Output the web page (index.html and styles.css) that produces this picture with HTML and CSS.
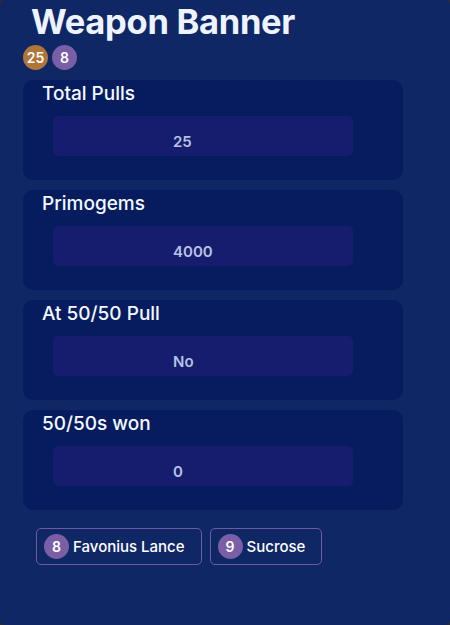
FILE: index.html
```html
<!DOCTYPE html>
<html>
<head>
<meta charset="utf-8">
<link rel="stylesheet" href="styles.css">
</head>
<body>
<div class="page">
  <h1 class="title">Weapon Banner</h1>
  <div class="badges">
    <span class="badge gold">25</span>
    <span class="badge purple">8</span>
  </div>
  <div class="cards">
    <div class="card">
      <div class="label">Total Pulls</div>
      <div class="field">25</div>
    </div>
    <div class="card">
      <div class="label">Primogems</div>
      <div class="field">4000</div>
    </div>
    <div class="card">
      <div class="label">At 50/50 Pull</div>
      <div class="field">No</div>
    </div>
    <div class="card">
      <div class="label">50/50s won</div>
      <div class="field">0</div>
    </div>
  </div>
  <div class="chips">
    <div class="chip"><span class="badge purple">8</span><span class="chip-text">Favonius Lance</span></div>
    <div class="chip"><span class="badge purple">9</span><span class="chip-text">Sucrose</span></div>
  </div>
</div>
</body>
</html>
```

FILE: styles.css
```css
html, body {
  margin: 0;
  padding: 0;
  background: #2b2b33;
}
body {
  width: 450px;
  height: 625px;
  overflow: hidden;
  font-family: Inter, "Noto Sans", sans-serif;
}
.page {
  width: 450px;
  height: 625px;
  box-sizing: border-box;
  background: #102766;
  border-radius: 5px;
  padding: 0 0 0 23px;
}
.title {
  margin: 0;
  padding: 2px 0 0 8px;
  font-size: 34.5px;
  font-weight: 700;
  line-height: 40px;
  color: #eef4ff;
  letter-spacing: -0.3px;
}
.badges {
  display: flex;
  gap: 4px;
  margin-top: 3px;
}
.badge {
  width: 25px;
  height: 25px;
  border-radius: 50%;
  display: flex;
  align-items: center;
  justify-content: center;
  color: #ffffff;
  font-size: 14px;
  font-weight: 600;
  flex: none;
  line-height: 1;
}
.gold { background: #b07638; }
.purple { background: #7a5ea6; }
.cards {
  display: flex;
  flex-direction: column;
  gap: 10px;
  margin-top: 10px;
  width: 380px;
}
.card {
  background: #061c5e;
  border-radius: 10px;
  height: 100px;
  box-sizing: border-box;
  padding: 4px 0 0 19px;
}
.label {
  color: #f4f8ff;
  font-size: 19px;
  font-weight: 500;
  line-height: 20px;
}
.field {
  margin: 12px 0 0 11px;
  width: 300px;
  height: 40px;
  box-sizing: border-box;
  background: #161d6e;
  border-radius: 5px;
  padding: 18px 0 0 120px;
  color: #b6c2e2;
  font-size: 15px;
  font-weight: 600;
  line-height: 15px;
}
.chips {
  display: flex;
  gap: 8px;
  margin: 18px 0 0 13px;
}
.chip {
  display: flex;
  align-items: center;
  gap: 4px;
  height: 37px;
  box-sizing: border-box;
  border: 1px solid #6e5aa6;
  border-radius: 5px;
  padding: 0 16px 0 7px;
}
.chip-text {
  color: #ffffff;
  font-size: 15px;
  font-weight: 500;
}
```
